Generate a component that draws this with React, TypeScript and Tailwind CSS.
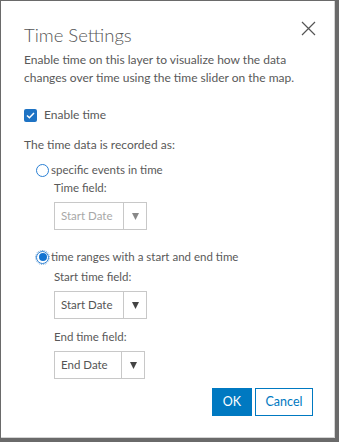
import React from 'react';

function Select({ label, disabled, width }: { label: string; disabled?: boolean; width: string }) {
  return (
    <div className={`flex h-[28px] ${width} border border-[#c8c8c8] bg-white`}>
      <div className={`flex-1 flex items-center pl-[6px] text-[11.5px] ${disabled ? 'text-[#a8a8a8]' : 'text-[#555]'}`}>
        {label}
      </div>
      <div className="w-[23px] border-l border-[#c8c8c8] flex items-center justify-center">
        <svg width="7" height="7" viewBox="0 0 8 8">
          <path d="M0 0 H8 L4 8 Z" fill={disabled ? '#888' : '#444'} />
        </svg>
      </div>
    </div>
  );
}

export default function App() {
  return (
    <div
      className="w-[339px] h-[442px] bg-[#6a6a6a] pt-px pl-px pr-[4px] pb-[4px]"
      style={{ fontFamily: 'Lato, "Open Sans", sans-serif' }}
    >
      <div className="h-full bg-white border-r border-b border-[#d4d4d4] text-[#595959] relative pl-[23px] pr-[20px]">
        {/* Close */}
        <button className="absolute right-[18px] top-[20px]">
          <svg width="15" height="15" viewBox="0 0 15 15">
            <path d="M1 1 L14 14 M14 1 L1 14" stroke="#555" strokeWidth="1.2" />
          </svg>
        </button>

        <h2 className="pt-[22px] text-[18.5px] leading-[24px] font-light text-[#555]">Time Settings</h2>

        <p className="mt-[4px] text-[12px] leading-[18px]">
          Enable time on this layer to visualize how the data changes over time using the time slider on the map.
        </p>

        <label className="mt-[19px] flex items-center gap-[7px] text-[12px]">
          <span className="w-[13px] h-[13px] rounded-[2px] bg-[#1e73c4] flex items-center justify-center">
            <svg width="9" height="7" viewBox="0 0 9 7">
              <path d="M1 3.5 L3.4 5.8 L8 1" stroke="white" strokeWidth="1.5" fill="none" />
            </svg>
          </span>
          Enable time
        </label>

        <div className="mt-[12px] text-[12px] leading-[18px]">The time data is recorded as:</div>

        <div className="mt-[8px] pl-[12px]">
          <div className="flex items-center gap-[2px] text-[11.5px] leading-[16px]">
            <span className="w-[13px] h-[13px] rounded-full border-[1.5px] border-[#2a7fd4] bg-white" />
            specific events in time
          </div>
          <div className="pl-[18px]">
            <div className="mt-[2px] text-[11.5px] leading-[16px]">Time field:</div>
            <div className="mt-[6px]">
              <Select label="Start Date" disabled width="w-[93px]" />
            </div>
          </div>

          <div className="mt-[19px] flex items-center gap-[2px] text-[11.5px] leading-[16px]">
            <span className="w-[13px] h-[13px] rounded-full border border-[#2a7fd4] bg-white flex items-center justify-center outline outline-1 outline-dotted outline-[#7aa9d6]">
              <span className="w-[8px] h-[8px] rounded-full bg-[#1373d0]" />
            </span>
            time ranges with a start and end time
          </div>
          <div className="pl-[18px]">
            <div className="mt-[4px] text-[11.5px] leading-[16px]">Start time field:</div>
            <div className="mt-[6px]">
              <Select label="Start Date" width="w-[93px]" />
            </div>
            <div className="mt-[10px] text-[11.5px] leading-[16px]">End time field:</div>
            <div className="mt-[6px]">
              <Select label="End Date" width="w-[91px]" />
            </div>
          </div>
        </div>

        <div className="absolute right-[21px] top-[387px] flex gap-[3px]">
          <button className="w-[40px] h-[28px] bg-[#0079c1] text-white text-[12.5px]">OK</button>
          <button className="w-[58px] h-[28px] border border-[#0079c1] text-[#0079c1] bg-white text-[12.5px]">Cancel</button>
        </div>
      </div>
    </div>
  );
}
